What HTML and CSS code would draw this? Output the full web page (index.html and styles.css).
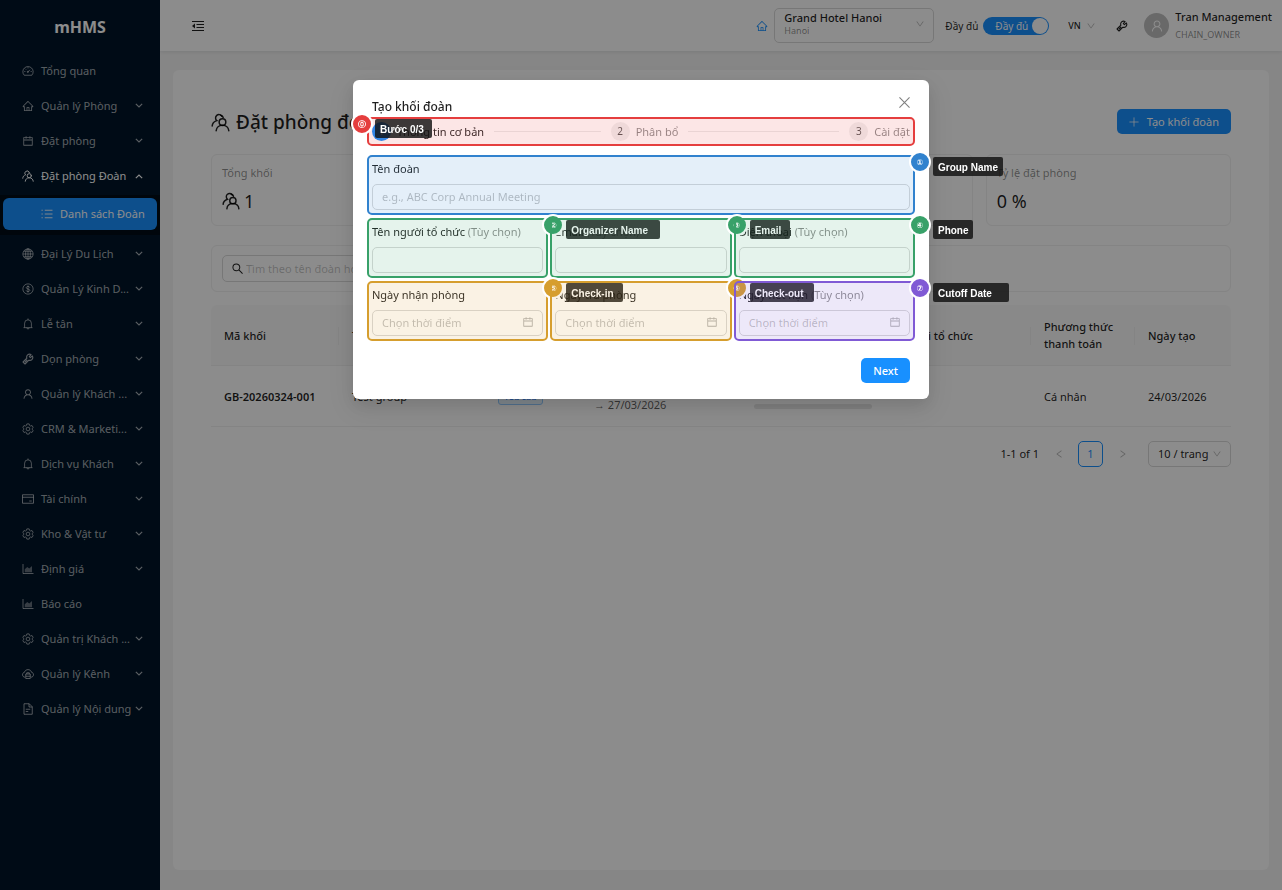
FILE: index.html
```html
<!DOCTYPE html>
<html lang="vi">
<head>
<meta charset="utf-8">
<meta name="viewport" content="width=device-width, initial-scale=1">
<title>mHMS – Đặt phòng đoàn</title>
<link rel="stylesheet" href="styles.css">
</head>
<body>
<svg class="sprite" aria-hidden="true">
  <symbol id="down" viewBox="0 0 1024 1024"><path fill="currentColor" d="M884 256h-75c-5.1 0-9.9 2.5-12.9 6.6L512 654.2 227.9 262.6c-3-4.1-7.8-6.6-12.9-6.6h-75c-6.500 0-10.300 7.400-6.500 12.700l352.600 486.100c12.800 17.600 39 17.600 51.700 0l352.600-486.100c3.900-5.300.1-12.700-6.400-12.700z"/></symbol>
  <symbol id="chevron" viewBox="0 0 24 24"><path fill="none" stroke="currentColor" stroke-width="3.500" d="M2.500 5.500L12 15l9.500-9.500"/></symbol>
  <symbol id="home" viewBox="0 0 1024 1024"><path fill="currentColor" d="M946.5 505L560.1 118.8l-25.900-25.900a31.500 31.500 0 0 0-44.400 0L77.500 505a63.900 63.900 0 0 0-18.800 46c.4 35.200 29.700 63.300 64.900 63.300h42.500V940h691.800V614.300h43.400c17.100 0 33.200-6.700 45.300-18.800a63.600 63.600 0 0 0 18.700-45.300c0-17-6.700-33.100-18.800-45.200zM568 868H456V664h112v204zm217.900-325.700V868H632V640c0-22.100-17.900-40-40-40H432c-22.100 0-40 17.900-40 40v228H238.100V542.300h-96l370-369.700 23.100 23.100L882 542.300h-96.100z"/></symbol>
  <symbol id="calendar" viewBox="0 0 1024 1024"><path fill="currentColor" d="M880 184H712v-64c0-4.400-3.600-8-8-8h-56c-4.400 0-8 3.600-8 8v64H384v-64c0-4.400-3.600-8-8-8h-56c-4.400 0-8 3.600-8 8v64H144c-17.700 0-32 14.300-32 32v664c0 17.700 14.300 32 32 32h736c17.700 0 32-14.300 32-32V216c0-17.700-14.300-32-32-32zm-40 656H184V460h656v380zM184 392V256h128v48c0 4.400 3.600 8 8 8h56c4.400 0 8-3.600 8-8v-48h256v48c0 4.400 3.600 8 8 8h56c4.400 0 8-3.600 8-8v-48h128v136H184z"/></symbol>
  <symbol id="user" viewBox="0 0 1024 1024"><path fill="currentColor" d="M858.500 763.600a374 374 0 0 0-80.600-119.500 375.630 375.630 0 0 0-119.500-80.600c-.4-.2-.8-.3-1.200-.5C719.500 518 760 444.700 760 362c0-137-111-248-248-248S264 225 264 362c0 82.700 40.500 156 102.800 201.100-.4.2-.8.3-1.200.5-44.800 18.900-85 46-119.500 80.600a375.630 375.630 0 0 0-80.600 119.500A371.700 371.700 0 0 0 136 901.800a8 8 0 0 0 8 8.200h60c4.400 0 7.900-3.500 8-7.800 2-77.200 33-149.500 87.800-204.300 56.700-56.700 132-87.900 212.200-87.900s155.500 31.200 212.200 87.900C779 752.700 810 825 812 902.200c.1 4.400 3.600 7.800 8 7.800h60a8 8 0 0 0 8-8.200c-1-47.800-10.900-94.300-29.500-138.200zM512 534c-45.900 0-89.100-17.900-121.600-50.400S340 407.900 340 362c0-45.900 17.900-89.100 50.400-121.600S466.100 190 512 190s89.100 17.900 121.600 50.400S684 316.100 684 362c0 45.900-17.900 89.100-50.400 121.600S557.900 534 512 534z"/></symbol>
  <symbol id="team" viewBox="0 0 24 24"><g fill="none" stroke="currentColor" stroke-width="1.900" stroke-linecap="round"><circle cx="14.500" cy="11.500" r="4.200"/><path d="M6.500 22.500c.3-4.200 3.600-7 8-7s7.700 2.800 8 7"/><path d="M13.800 4.200A4.300 4.300 0 1 0 7.300 9.600C3.800 10.700 1.700 13 1.500 16.500"/><path d="M12.200 2.700c1.700.4 2.800 1.500 3.200 3"/></g></symbol>
  <symbol id="dashboard" viewBox="0 0 24 24"><g fill="none" stroke="currentColor" stroke-width="1.700"><path d="M4.500 20.500a10.300 10.300 0 1 1 15 0z"/><path d="M12 13.500l4-4M12 4.500v2.300M4.500 13h2.300M17.200 13h2.300M6.700 7.700l1.500 1.500"/><circle cx="11.700" cy="13.800" r="1.200"/></g></symbol>
  <symbol id="list" viewBox="0 0 24 24"><g fill="none" stroke="currentColor" stroke-width="1.800"><path d="M7.500 4.500H23M7.500 12H23M7.500 19.500H23M1 4.500h2.500M1 12h2.500M1 19.500h2.500"/></g></symbol>
  <symbol id="globe" viewBox="0 0 24 24"><g fill="none" stroke="currentColor" stroke-width="1.600"><circle cx="12" cy="12" r="10.300"/><ellipse cx="12" cy="12" rx="4.800" ry="10.300"/><path d="M12 1.700v20.600M1.700 12h20.600M3.500 6.500h17M3.500 17.500h17"/></g></symbol>
  <symbol id="dollar" viewBox="0 0 24 24"><g fill="none" stroke="currentColor" stroke-width="1.700"><circle cx="12" cy="12" r="10.300"/><path d="M12 5v14M15.500 9.200c-.2-1.400-1.600-2.300-3.500-2.300s-3.400 1-3.400 2.500c0 3.600 7 1.600 7 5.200 0 1.500-1.500 2.600-3.600 2.600s-3.600-1-3.700-2.500"/></g></symbol>
  <symbol id="bell" viewBox="0 0 24 24"><g fill="none" stroke="currentColor" stroke-width="1.700"><path d="M3 19.300h18M5.200 19V10.500a6.800 6.800 0 0 1 13.600 0V19M12 1v2.700M9.500 19.500c.3 3.300 4.700 3.300 5 0"/></g></symbol>
  <symbol id="tool" viewBox="0 0 24 24"><path fill="none" stroke="currentColor" stroke-width="2.200" stroke-linejoin="round" d="M20.700 5.900l-3.800 3.300-2.300-2.200 3.500-3.900c-3-1.500-6.300-.6-7.900 1.900-1.100 1.800-1.100 3.600-.5 5.500L2.100 18l4 4 7.600-7.600c2.200.8 4.500.3 6.100-1.300 2-2 2.300-4.700.9-7.200zM10.500 13.800l-4.400 4.400"/></symbol>
  <symbol id="setting" viewBox="0 0 24 24"><g fill="none" stroke="currentColor" stroke-width="1.700" stroke-linejoin="round"><path d="M9.700 1.800h4.600l.8 3 2 1.200 3-.9 2.300 4-2.200 2.100v1.600l2.200 2.100-2.300 4-3-.9-2 1.200-.8 3H9.700l-.8-3-2-1.200-3 .9-2.300-4 2.200-2.100v-1.600L1.600 9.100l2.300-4 3 .9 2-1.200z"/><circle cx="12" cy="12" r="3.700"/></g></symbol>
  <symbol id="card" viewBox="0 0 24 24"><g fill="none" stroke="currentColor" stroke-width="1.800"><path d="M1 3.500h22v17H1zM1 8.500h22M14.500 16h5"/></g></symbol>
  <symbol id="chart" viewBox="0 0 24 24"><path fill="none" stroke="currentColor" stroke-width="1.700" d="M2 2v19h21"/><path fill="currentColor" opacity=".6" d="M5.500 18.500v-6l5-4.500 4 3 5.500-5v12.500z"/></symbol>
  <symbol id="cloud" viewBox="0 0 24 24"><g fill="none" stroke="currentColor" stroke-width="1.800"><path d="M6 18.500C-.5 18-.5 9.500 5 8.500 6.500 1.500 17.500 1.500 19 8.500c5.500 1 5.500 9.500-1 10"/><path d="M7.500 12h9v9h-9zM9.500 12V9.500h5V12M7.500 16.500h9"/></g></symbol>
  <symbol id="file" viewBox="0 0 24 24"><path fill="none" stroke="currentColor" stroke-width="1.800" d="M4 1.500h10.500L20.500 7.500v15H4zM14 1.500V8h6.500M7.500 12.500h9M7.500 17h5"/></symbol>
  <symbol id="fold" viewBox="0 0 24 24"><path fill="none" stroke="currentColor" stroke-width="2" d="M0 3h24M9 9h15M9 15h15M0 21h24"/><path fill="currentColor" d="M0 12l6-5v10z"/></symbol>
  <symbol id="search" viewBox="0 0 24 24"><path fill="none" stroke="currentColor" stroke-width="2.200" d="M15.500 15.500L23 23M17 9.500a7.500 7.500 0 1 1-15 0 7.500 7.500 0 0 1 15 0z"/></symbol>
  <symbol id="plus" viewBox="0 0 24 24"><path stroke="currentColor" stroke-width="1.800" d="M12 1v22M1 12h22"/></symbol>
  <symbol id="close" viewBox="0 0 24 24"><path stroke="currentColor" stroke-width="2.400" d="M1 1l22 22M23 1L1 23"/></symbol>
</svg>

<div class="app">
  <aside class="sidebar">
    <div class="brand">mHMS</div>
    <nav class="menu">
      <a class="item" href="#"><svg class="icon"><use href="#dashboard"/></svg><span>Tổng quan</span></a>
      <a class="item" href="#"><svg class="icon"><use href="#home"/></svg><span>Quản lý Phòng</span><svg class="arrow"><use href="#chevron"/></svg></a>
      <a class="item" href="#"><svg class="icon"><use href="#calendar"/></svg><span>Đặt phòng</span><svg class="arrow"><use href="#chevron"/></svg></a>
      <a class="item open" href="#"><svg class="icon"><use href="#team"/></svg><span>Đặt phòng Đoàn</span><svg class="arrow"><use href="#chevron"/></svg></a>
      <div class="submenu"><a class="item selected" href="#"><svg class="icon"><use href="#list"/></svg><span>Danh sách Đoàn</span></a></div>
      <a class="item" href="#"><svg class="icon"><use href="#globe"/></svg><span>Đại Lý Du Lịch</span><svg class="arrow"><use href="#chevron"/></svg></a>
      <a class="item" href="#"><svg class="icon"><use href="#dollar"/></svg><span>Quản Lý Kinh D...</span><svg class="arrow"><use href="#chevron"/></svg></a>
      <a class="item" href="#"><svg class="icon"><use href="#bell"/></svg><span>Lễ tân</span><svg class="arrow"><use href="#chevron"/></svg></a>
      <a class="item" href="#"><svg class="icon"><use href="#tool"/></svg><span>Dọn phòng</span><svg class="arrow"><use href="#chevron"/></svg></a>
      <a class="item" href="#"><svg class="icon"><use href="#user"/></svg><span>Quản lý Khách ...</span><svg class="arrow"><use href="#chevron"/></svg></a>
      <a class="item" href="#"><svg class="icon"><use href="#setting"/></svg><span>CRM &amp; Marketi...</span><svg class="arrow"><use href="#chevron"/></svg></a>
      <a class="item" href="#"><svg class="icon"><use href="#bell"/></svg><span>Dịch vụ Khách</span><svg class="arrow"><use href="#chevron"/></svg></a>
      <a class="item" href="#"><svg class="icon"><use href="#card"/></svg><span>Tài chính</span><svg class="arrow"><use href="#chevron"/></svg></a>
      <a class="item" href="#"><svg class="icon"><use href="#setting"/></svg><span>Kho &amp; Vật tư</span><svg class="arrow"><use href="#chevron"/></svg></a>
      <a class="item" href="#"><svg class="icon"><use href="#chart"/></svg><span>Định giá</span><svg class="arrow"><use href="#chevron"/></svg></a>
      <a class="item" href="#"><svg class="icon"><use href="#chart"/></svg><span>Báo cáo</span></a>
      <a class="item" href="#"><svg class="icon"><use href="#setting"/></svg><span>Quản trị Khách ...</span><svg class="arrow"><use href="#chevron"/></svg></a>
      <a class="item" href="#"><svg class="icon"><use href="#cloud"/></svg><span>Quản lý Kênh</span><svg class="arrow"><use href="#chevron"/></svg></a>
      <a class="item" href="#"><svg class="icon"><use href="#file"/></svg><span>Quản lý Nội dung</span><svg class="arrow"><use href="#chevron"/></svg></a>
    </nav>
  </aside>

  <div class="main">
    <header class="topbar">
      <button class="plain fold" type="button" aria-label="Thu gọn menu"><svg class="icon12"><use href="#fold"/></svg></button>
      <svg class="hotel-icon"><use href="#home"/></svg>
      <button class="hotel" type="button">
        <span class="hotel-text"><strong>Grand Hotel Hanoi</strong><small>Hanoi</small></span>
        <svg class="caret"><use href="#down"/></svg>
      </button>
      <label class="mode"><span>Đầy đủ</span><input class="hidden-input" type="checkbox" role="switch" checked><span class="switch">Đầy đủ<i class="knob"></i></span></label>
      <div class="pick lang">
        <select aria-label="Ngôn ngữ"><option>VN</option></select>
        <svg class="caret"><use href="#down"/></svg>
      </div>
      <button class="plain" type="button" aria-label="Công cụ"><svg class="icon12"><use href="#tool"/></svg></button>
      <div class="account">
        <span class="avatar"><svg class="icon14"><use href="#user"/></svg></span>
        <span class="who"><strong>Tran Management</strong><small>CHAIN_OWNER</small></span>
      </div>
    </header>

    <main class="content">
      <div class="page-head">
        <h1><svg class="icon19"><use href="#team"/></svg>Đặt phòng đoàn</h1>
        <button class="primary create" type="button"><svg class="icon10"><use href="#plus"/></svg>Tạo khối đoàn</button>
      </div>
      <section class="stats">
        <div class="stat"><span>Tổng khối</span><b><svg class="icon18"><use href="#team"/></svg>1</b></div>
        <div class="stat"><span>Tổng phòng</span><b>0</b></div>
        <div class="stat"><span>Đã đặt</span><b>0</b></div>
        <div class="stat"><span>Tỷ lệ đặt phòng</span><b>0 %</b></div>
      </section>
      <section class="filter">
        <label class="search"><svg class="icon11"><use href="#search"/></svg><input type="text" aria-label="Tìm kiếm" placeholder="Tìm theo tên đoàn hoặc mã"></label>
      </section>
      <table class="groups">
        <colgroup><col class="c-code"><col class="c-name"><col class="c-state"><col class="c-date"><col class="c-prog"><col class="c-org"><col class="c-pay"><col class="c-made"></colgroup>
        <thead><tr><th>Mã khối</th><th>Tên đoàn</th><th>Trạng thái</th><th>Ngày</th><th>Tiến độ</th><th>Người tổ chức</th><th>Phương thức thanh toán</th><th>Ngày tạo</th></tr></thead>
        <tbody><tr>
          <td><strong class="code">GB-20260324-001</strong></td><td>Test group</td><td><span class="tag">Yêu cầu</span></td>
          <td class="dates">25/03/2026<br>→ 27/03/2026</td>
          <td><span class="count">0 / 0</span><div class="bar"></div></td><td></td><td>Cá nhân</td><td>24/03/2026</td>
        </tr></tbody>
      </table>
      <div class="pager">
        <span class="total">1-1 of 1</span>
        <button class="plain prev" type="button" aria-label="Trang trước"><svg class="icon10"><use href="#down"/></svg></button>
        <button class="current" type="button">1</button>
        <button class="plain next-page" type="button" aria-label="Trang sau"><svg class="icon10"><use href="#down"/></svg></button>
        <div class="pick size">
          <select aria-label="Số dòng mỗi trang"><option>10 / trang</option></select>
          <svg class="caret"><use href="#down"/></svg>
        </div>
      </div>
    </main>
  </div>
</div>

<div class="mask">
  <form class="modal" role="dialog" aria-labelledby="dlg">
    <div class="modal-head"><h2 id="dlg">Tạo khối đoàn</h2><button class="plain" type="button" aria-label="Đóng"><svg class="icon11"><use href="#close"/></svg></button></div>

    <div class="steps field red at-left">
      <div class="step active"><i>1</i><span>Thông tin cơ bản</span></div>
      <div class="step"><i>2</i><span>Phân bổ</span></div>
      <div class="step"><i>3</i><span>Cài đặt</span></div>
      <div class="note"><span class="badge">⓪</span><span class="tip w57">Bước 0/3</span></div>
    </div>

    <div class="fields">
      <div class="field wide blue">
        <label for="f1">Tên đoàn</label><input id="f1" type="text" placeholder="e.g., ABC Corp Annual Meeting">
        <div class="note"><span class="badge">①</span><span class="tip w70">Group Name</span></div>
      </div>
      <div class="field green">
        <label for="f2">Tên người tổ chức <em>(Tùy chọn)</em></label><input id="f2" type="text">
        <div class="note"><span class="badge">②</span><span class="tip w94">Organizer Name</span></div>
      </div>
      <div class="field green">
        <label for="f3">Email <em>(Tùy chọn)</em></label><input id="f3" type="email">
        <div class="note"><span class="badge">③</span><span class="tip w40">Email</span></div>
      </div>
      <div class="field green">
        <label for="f4">Điện thoại <em>(Tùy chọn)</em></label><input id="f4" type="tel">
        <div class="note"><span class="badge">④</span><span class="tip w40">Phone</span></div>
      </div>
      <div class="field gold">
        <label for="f5">Ngày nhận phòng</label><div class="date"><input id="f5" type="text" placeholder="Chọn thời điểm"><svg class="icon12"><use href="#calendar"/></svg></div>
        <div class="note"><span class="badge">⑤</span><span class="tip w57">Check-in</span></div>
      </div>
      <div class="field gold">
        <label for="f6">Ngày trả phòng</label><div class="date"><input id="f6" type="text" placeholder="Chọn thời điểm"><svg class="icon12"><use href="#calendar"/></svg></div>
        <div class="note"><span class="badge">⑥</span><span class="tip w64">Check-out</span></div>
      </div>
      <div class="field purple">
        <label for="f7">Ngày hết hạn <em>(Tùy chọn)</em></label><div class="date"><input id="f7" type="text" placeholder="Chọn thời điểm"><svg class="icon12"><use href="#calendar"/></svg></div>
        <div class="note"><span class="badge">⑦</span><span class="tip w76">Cutoff Date</span></div>
      </div>
    </div>
    <div class="modal-foot"><button class="primary" type="button">Next</button></div>
  </form>
</div>
</body>
</html>
```
FILE: styles.css
```css
* { box-sizing: border-box; }
body {
  margin: 0;
  font: 11px/18px "Noto Sans", "Open Sans", sans-serif;
  color: rgba(0, 0, 0, .88);
  background: #f5f5f5;
}
button, input, select { font: inherit; color: inherit; margin: 0; }
button { cursor: pointer; }
svg { display: block; flex: none; }
strong { font-weight: 500; }
.code { font-weight: 600; }
.sprite { display: none; }
.icon10 { width: 10px; height: 10px; }
.icon11 { width: 11px; height: 11px; }
.icon12, .icon { width: 12px; height: 12px; }
.icon14 { width: 14px; height: 14px; }
.icon18 { width: 18px; height: 18px; }
.icon19 { width: 19px; height: 19px; }
.caret { width: 10px; height: 10px; color: rgba(0, 0, 0, .3); }
.plain { display: flex; padding: 0; border: 0; background: none; }
.hidden-input { position: absolute; opacity: 0; width: 1px; height: 1px; }

.app { display: flex; min-height: 100vh; }

/* Sidebar */
.sidebar { flex: none; width: 160px; background: #001529; }
.brand {
  height: 51px;
  font-size: 16px;
  font-weight: 700;
  line-height: 54px;
  text-align: center;
  color: #fff;
}
.menu { display: flex; flex-direction: column; gap: 3px; padding-top: 4px; }
.item {
  display: flex;
  align-items: center;
  height: 32px;
  margin: 0 3px;
  padding: 0 14px 0 19px;
  border-radius: 6px;
  color: rgba(255, 255, 255, .65);
  text-decoration: none;
  white-space: nowrap;
}
.item span { flex: 1; min-width: 0; margin-left: 7px; }
.item .arrow { width: 8px; height: 8px; }
.item.open { color: #fff; }
.item.open .arrow { transform: rotate(180deg); }
.submenu { padding: 3px 0 5px; background: #000c17; }
.item.selected { padding: 0 0 0 38px; background: #1890ff; color: #fff; }

/* Top bar */
.main { flex: 1; min-width: 0; display: flex; flex-direction: column; }
.topbar {
  display: flex;
  align-items: center;
  height: 51px;
  padding: 0 10px 0 32px;
  background: #fff;
  box-shadow: 0 1px 4px rgba(0, 21, 41, .1);
}
.fold { margin-right: auto; }
.hotel-icon { width: 12px; height: 12px; margin-right: 6px; color: #1890ff; }
.hotel {
  display: flex;
  align-items: center;
  justify-content: space-between;
  width: 160px;
  height: 35px;
  padding: 0 8px 3px 9px;
  border: 1px solid #d9d9d9;
  border-radius: 5px;
  background: #fff;
  text-align: left;
}
.hotel-text { display: flex; flex-direction: column; line-height: 14px; }
small { font-size: 9px; line-height: 12px; color: rgba(0, 0, 0, .45); }
.mode { display: flex; align-items: center; gap: 5px; margin: 0 19px 0 11px; font-size: 10px; }
.switch {
  display: flex;
  align-items: center;
  justify-content: space-between;
  width: 66px;
  height: 18px;
  padding: 0 1px 0 12px;
  border-radius: 9px;
  background: #1890ff;
  color: #fff;
}
.knob { width: 16px; height: 16px; border-radius: 50%; background: #fff; }
.pick { position: relative; display: flex; align-items: center; }
.pick select { appearance: none; border: 0; background: none; outline: 0; }
.pick .caret { position: absolute; right: 8px; pointer-events: none; }
.lang { width: 36px; margin-right: 12px; font-size: 9px; font-weight: 500; }
.lang select { width: 36px; padding: 0; }
.account { display: flex; align-items: center; gap: 6px; margin-left: 16px; }
.avatar {
  display: flex;
  align-items: center;
  justify-content: center;
  width: 25px;
  height: 25px;
  border-radius: 50%;
  background: #bfbfbf;
  color: #fff;
}
.who { display: flex; flex-direction: column; line-height: 18px; }
.who small { line-height: 18px; }

/* Page */
.content {
  flex: 1;
  margin: 19px 13px 20px;
  padding: 38px;
  border-radius: 6px;
  background: #fff;
}
.page-head { display: flex; align-items: center; justify-content: space-between; height: 27px; }
h1 { display: flex; align-items: center; gap: 6px; margin: 0; padding-top: 2px; font-size: 19px; font-weight: 500; line-height: 27px; }
.primary {
  display: flex;
  align-items: center;
  gap: 8px;
  height: 25px;
  padding: 0 12px;
  border: 0;
  border-radius: 5px;
  background: #1890ff;
  color: #fff;
}
.stats { display: grid; grid-template-columns: repeat(4, 1fr); gap: 13px; margin: 19px 0; }
.stat { height: 72px; padding: 9px 10px; border: 1px solid #f0f0f0; border-radius: 6px; }
.stat span { color: rgba(0, 0, 0, .45); }
.stat b { display: flex; align-items: center; gap: 4px; margin-top: 6px; font-size: 18px; font-weight: 400; line-height: 26px; }
.filter { height: 47px; margin-bottom: 13px; padding: 9px 10px; border: 1px solid #f0f0f0; border-radius: 6px; }
.search {
  display: flex;
  align-items: center;
  gap: 3px;
  width: 240px;
  height: 27px;
  padding: 0 9px;
  border: 1px solid #d9d9d9;
  border-radius: 5px;
}
.search input { flex: 1; min-width: 0; padding: 0; border: 0; outline: 0; background: none; }
input::placeholder { color: rgba(0, 0, 0, .25); opacity: 1; }

.groups { width: 100%; border-collapse: separate; border-spacing: 0; table-layout: fixed; line-height: 17px; }
.c-code { width: 128px; }
.c-name { width: 146px; }
.c-state { width: 96px; }
.c-date { width: 160px; }
.c-prog { width: 144px; }
.c-org { width: 146px; }
.c-pay { width: 104px; }
.groups th, .groups td { height: 61px; padding: 0 13px; border-bottom: 1px solid #f0f0f0; text-align: left; }
.groups th { position: relative; background: #fafafa; font-weight: 500; }
.groups th:first-child { border-top-left-radius: 6px; }
.groups th:last-child { border-top-right-radius: 6px; }
.groups th:not(:last-child)::after {
  content: "";
  position: absolute;
  top: 22px;
  right: 0;
  width: 1px;
  height: 18px;
  background: #f0f0f0;
}
.tag {
  display: inline-block;
  padding: 0 5px;
  border: 1px solid #91caff;
  border-radius: 3px;
  background: #e6f4ff;
  color: #1677ff;
  font-size: 9px;
  line-height: 15px;
}
.dates, .count { color: rgba(0, 0, 0, .65); }
.bar { height: 5px; margin-top: 4px; border-radius: 3px; background: #e8e8e8; }

.pager { display: flex; align-items: center; justify-content: flex-end; margin-top: 14px; }
.current { width: 25px; height: 26px; margin: 0 15px 0 14px; padding: 0; border: 1px solid #1890ff; border-radius: 5px; background: #fff; color: #1890ff; }
.total { margin-right: 15px; }
.pager .plain { color: rgba(0, 0, 0, .3); }
.prev svg { transform: rotate(90deg); }
.next-page svg { transform: rotate(-90deg); }
.size { width: 83px; height: 26px; margin-left: 20px; border: 1px solid #d9d9d9; border-radius: 5px; }
.size select { width: 100%; padding: 0 9px; }

/* Dialog */
.mask { position: fixed; inset: 0; z-index: 10; padding: 80px 16px; overflow: auto; background: rgba(0, 0, 0, .45); }
.modal {
  max-width: 576px;
  margin: 0 auto;
  padding: 17px 19px 16px;
  border-radius: 6px;
  background: #fff;
  box-shadow: 0 6px 16px rgba(0, 0, 0, .1), 0 9px 28px 8px rgba(0, 0, 0, .06);
}
.modal-head { display: flex; justify-content: space-between; height: 25px; }
.modal-head h2 { margin: 0; font-size: 12px; font-weight: 500; line-height: 20px; }
.modal-head .plain { height: 11px; color: rgba(0, 0, 0, .5); }

.steps { display: flex; gap: 10px; margin-bottom: 19px; }
.step { display: flex; align-items: center; height: 19px; color: rgba(0, 0, 0, .45); }
.step i {
  width: 19px;
  margin-right: 6px;
  border-radius: 50%;
  background: rgba(0, 0, 0, .06);
  color: rgba(0, 0, 0, .65);
  font-size: 10px;
  font-style: normal;
  line-height: 19px;
  text-align: center;
}
.step:nth-child(-n+2) { flex: 1; }
.step:nth-child(-n+2)::after { content: ""; flex: 1; height: 1px; margin-left: 10px; background: rgba(5, 5, 5, .08); }
.step.active { color: rgba(0, 0, 0, .88); }
.step.active i { background: #1890ff; color: #fff; }

.fields { display: grid; grid-template-columns: repeat(3, 1fr); gap: 13px 12px; }
.field { position: relative; }
.wide { grid-column: 1 / -1; }
.field label { display: block; height: 24px; white-space: nowrap; }
.field em { font-style: normal; color: rgba(0, 0, 0, .45); }
.field input {
  display: block;
  width: 100%;
  height: 26px;
  padding: 0 9px 1px;
  border: 1px solid #d9d9d9;
  border-radius: 5px;
  outline: 0;
  background: #fff;
}
.date { position: relative; }
.date svg { position: absolute; top: 6px; right: 9px; color: rgba(0, 0, 0, .3); }
.modal-foot { display: flex; justify-content: flex-end; margin-top: 22px; font-weight: 500; }

/* Guide notes lying over the fields */
.red { --c: #e53e3e; --f: rgba(229, 62, 62, .13); }
.blue { --c: #3182ce; --f: rgba(49, 130, 206, .13); }
.green { --c: #38a169; --f: rgba(56, 161, 105, .13); }
.gold { --c: #d69e2e; --f: rgba(214, 158, 46, .13); }
.purple { --c: #805ad5; --f: rgba(128, 90, 213, .14); }
.note {
  position: absolute;
  inset: -5px;
  z-index: 1;
  border: 2px solid var(--c);
  border-radius: 5px;
  background: var(--f);
  font-family: "Liberation Sans", "DejaVu Sans", sans-serif;
  font-weight: 700;
  color: #fff;
  pointer-events: none;
}
.badge {
  position: absolute;
  top: -6px;
  left: calc(100% - 4px);
  width: 22px;
  height: 22px;
  border: 2px solid #fff;
  border-radius: 50%;
  background: var(--c);
  font-family: "DejaVu Sans", sans-serif;
  font-size: 8px;
  line-height: 19px;
  text-align: center;
}
.tip {
  position: absolute;
  top: 0;
  left: calc(100% + 20px);
  height: 19px;
  padding-left: 5px;
  border-radius: 2px;
  background: rgba(17, 17, 17, .82);
  font-size: 10px;
  line-height: 21px;
  white-space: nowrap;
}
.at-left .badge { left: -18px; }
.at-left .tip { left: 6px; }
.w40 { width: 40px; }
.w57 { width: 57px; }
.w64 { width: 64px; }
.w70 { width: 70px; }
.w76 { width: 76px; }
.w94 { width: 94px; }
```
